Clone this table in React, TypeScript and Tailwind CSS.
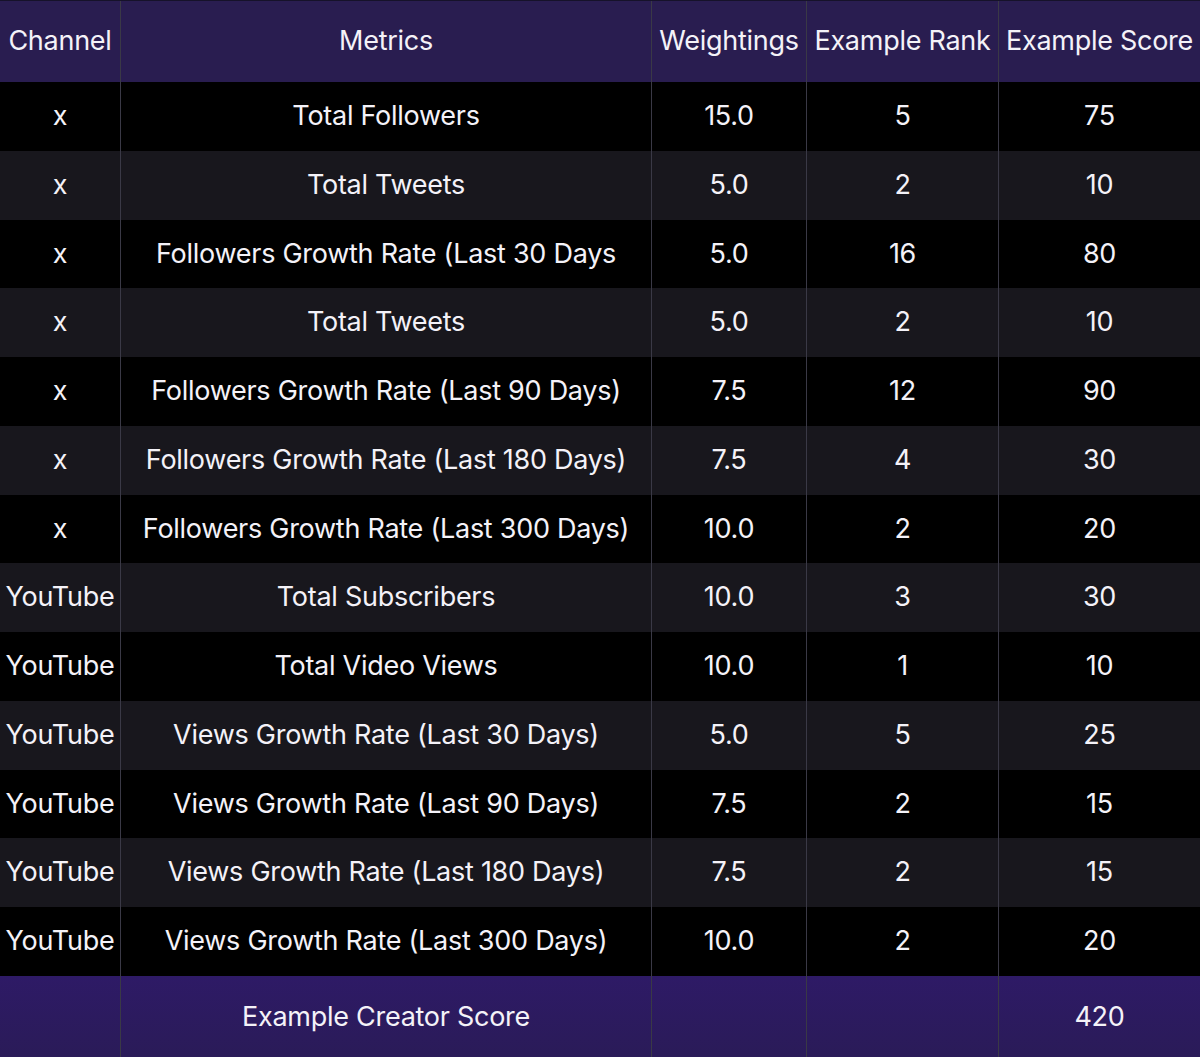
const rows: [string, string, string, string, string][] = [
  ["x", "Total Followers", "15.0", "5", "75"],
  ["x", "Total Tweets", "5.0", "2", "10"],
  ["x", "Followers Growth Rate (Last 30 Days", "5.0", "16", "80"],
  ["x", "Total Tweets", "5.0", "2", "10"],
  ["x", "Followers Growth Rate (Last 90 Days)", "7.5", "12", "90"],
  ["x", "Followers Growth Rate (Last 180 Days)", "7.5", "4", "30"],
  ["x", "Followers Growth Rate (Last 300 Days)", "10.0", "2", "20"],
  ["YouTube", "Total Subscribers", "10.0", "3", "30"],
  ["YouTube", "Total Video Views", "10.0", "1", "10"],
  ["YouTube", "Views Growth Rate (Last 30 Days)", "5.0", "5", "25"],
  ["YouTube", "Views Growth Rate (Last 90 Days)", "7.5", "2", "15"],
  ["YouTube", "Views Growth Rate (Last 180 Days)", "7.5", "2", "15"],
  ["YouTube", "Views Growth Rate (Last 300 Days)", "10.0", "2", "20"],
];

const cols = "grid grid-cols-[120px_531px_155px_192px_202px]";

function Cell({ children, first }: { children?: React.ReactNode; first?: boolean }) {
  return (
    <div
      className={
        "flex items-center justify-center whitespace-nowrap " +
        (first ? "" : "border-l border-[#3a3946]")
      }
    >
      {children}
    </div>
  );
}

export default function App() {
  return (
    <div className="w-[1200px] h-[1057px] bg-black text-[#f4f2f8] text-[27px] tracking-[-0.01em] font-['Inter',sans-serif] overflow-hidden">
      {/* Header */}
      <div className={`${cols} h-[82px] bg-[#291d50] border-t border-[#16122a]`}>
        <Cell first>Channel</Cell>
        <Cell>Metrics</Cell>
        <Cell>Weightings</Cell>
        <Cell>Example Rank</Cell>
        <Cell>Example Score</Cell>
      </div>

      {/* Body */}
      {rows.map((r, i) => (
        <div
          key={i}
          className={`${cols} h-[68.75px] ${i % 2 === 0 ? "bg-black" : "bg-[#18171d]"}`}
        >
          <Cell first>{r[0]}</Cell>
          <Cell>{r[1]}</Cell>
          <Cell>{r[2]}</Cell>
          <Cell>{r[3]}</Cell>
          <Cell>{r[4]}</Cell>
        </div>
      ))}

      {/* Footer */}
      <div className={`${cols} h-[82px] bg-gradient-to-b from-[#2e1a66] to-[#2a1b58]`}>
        <Cell first />
        <Cell>Example Creator Score</Cell>
        <Cell />
        <Cell />
        <Cell>420</Cell>
      </div>
    </div>
  );
}
